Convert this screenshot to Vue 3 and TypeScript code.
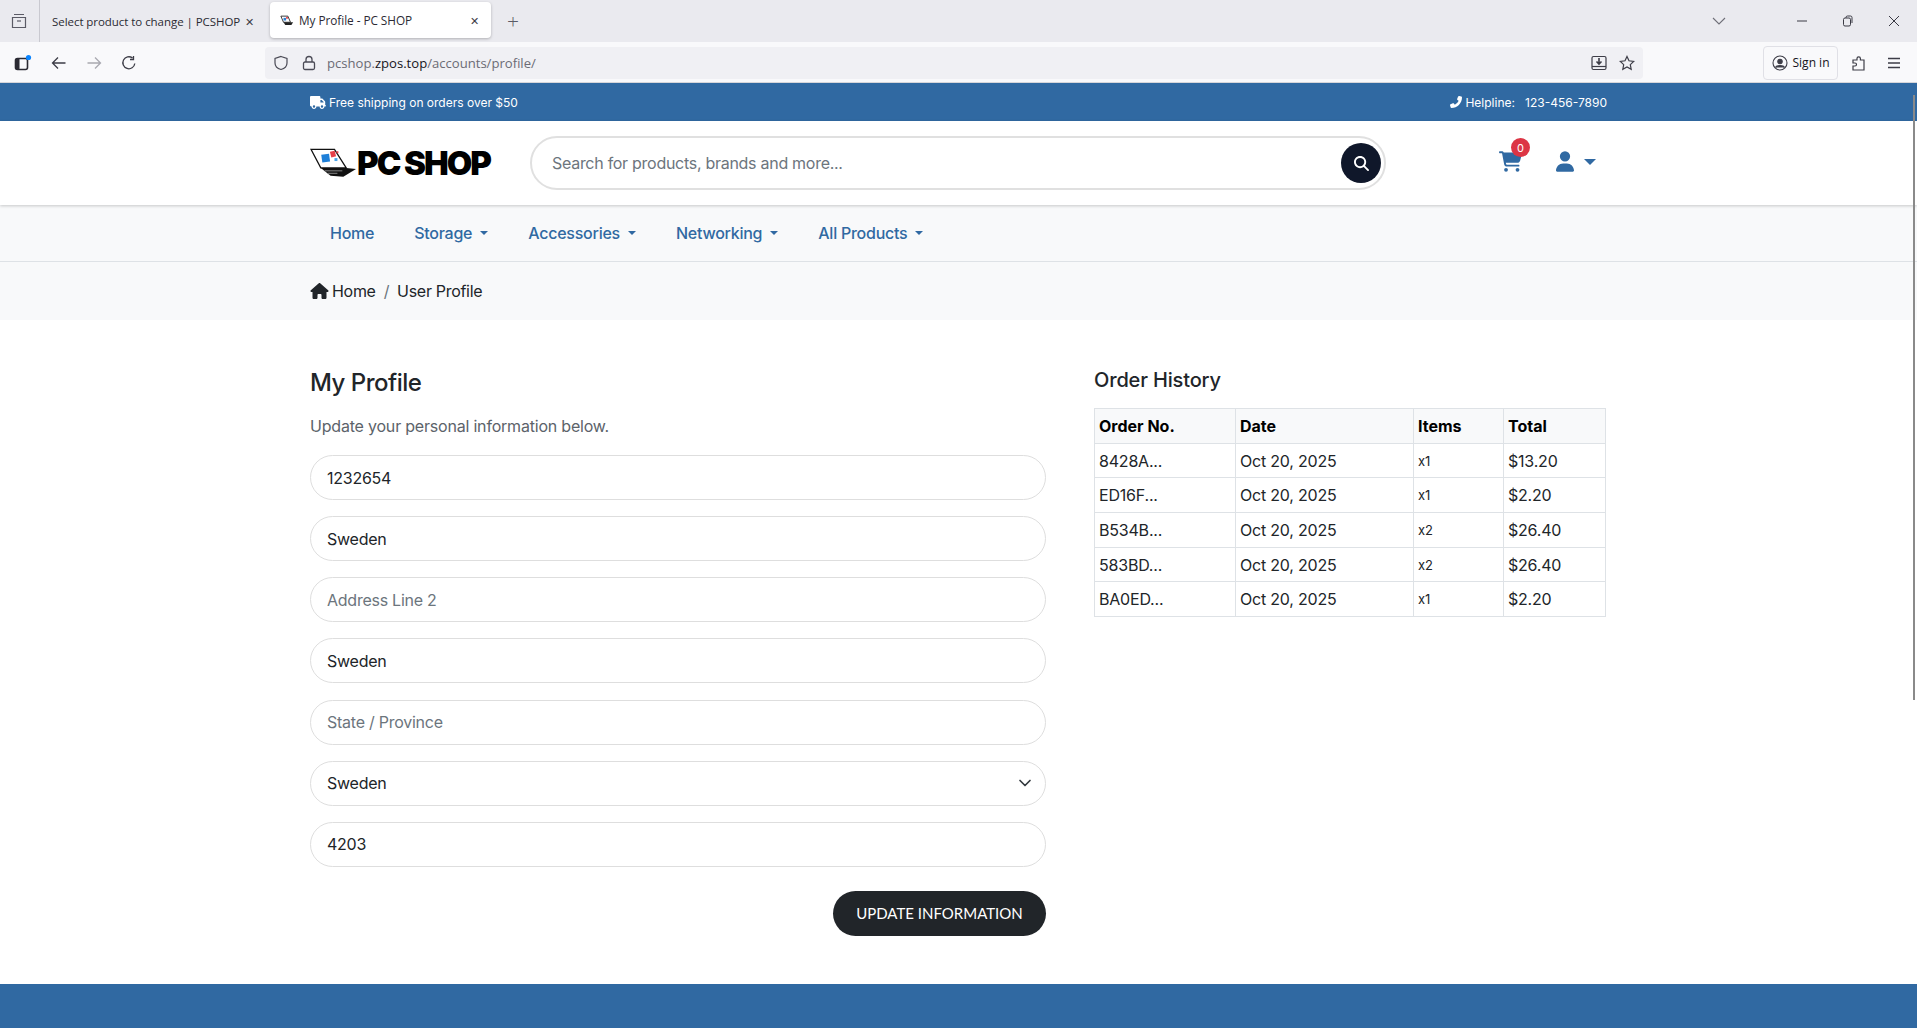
<script setup lang="ts">
interface Order {
  no: string
  date: string
  items: string
  total: string
}

const orders: Order[] = [
  { no: '8428A...', date: 'Oct 20, 2025', items: 'x1', total: '$13.20' },
  { no: 'ED16F...', date: 'Oct 20, 2025', items: 'x1', total: '$2.20' },
  { no: 'B534B...', date: 'Oct 20, 2025', items: 'x2', total: '$26.40' },
  { no: '583BD...', date: 'Oct 20, 2025', items: 'x2', total: '$26.40' },
  { no: 'BA0ED...', date: 'Oct 20, 2025', items: 'x1', total: '$2.20' },
]

const navItems = [
  { label: 'Home', caret: false },
  { label: 'Storage', caret: true },
  { label: 'Accessories', caret: true },
  { label: 'Networking', caret: true },
  { label: 'All Products', caret: true },
]
</script>

<template>
  <div class="window">
    <!-- Browser chrome -->
    <div class="tabstrip">
      <div class="strip-start">
        <svg viewBox="0 0 16 16" width="16" height="16" fill="none" stroke="#5b5b66" stroke-width="1.2">
          <path d="M3 1.5h10M1.5 4.5h13v10h-13z" />
          <path d="M6 8h4" />
        </svg>
      </div>
      <div class="tab">
        <span class="tab-title">Select product to change | PCSHOP</span>
        <span class="tab-close">✕</span>
      </div>
      <div class="tab tab-active">
        <svg class="favicon" viewBox="0 0 16 12" width="14" height="11">
          <path d="M1 1h8l3 7H4z" fill="#fff" stroke="#222" />
          <path d="M4 8h11l-2 3H6z" fill="#222" />
          <rect x="4" y="3" width="3" height="3" fill="#2d7fd3" />
          <rect x="7" y="2" width="2" height="2" fill="#e5404a" />
        </svg>
        <span class="tab-title">My Profile - PC SHOP</span>
        <span class="tab-close">✕</span>
      </div>
      <span class="new-tab">+</span>
      <div class="strip-end">
        <svg class="strip-chevron" viewBox="0 0 14 8" width="14" height="8" fill="none" stroke="#6f6f78" stroke-width="1.1">
          <path d="M1 1l6 6 6-6" />
        </svg>
        <div class="win-controls">
          <svg viewBox="0 0 12 12" width="12" height="12" stroke="#3a3a44" fill="none"><path d="M1 6h10" /></svg>
          <svg viewBox="0 0 12 12" width="12" height="12" stroke="#3a3a44" fill="none"><rect x="1.5" y="3" width="7" height="8" rx="1.5" /><path d="M4 3V2.5A1.5 1.5 0 0 1 5.5 1h3A1.5 1.5 0 0 1 10 2.5V8" /></svg>
          <svg viewBox="0 0 12 12" width="12" height="12" stroke="#3a3a44" fill="none"><path d="M1 1l10 10M11 1L1 11" /></svg>
        </div>
      </div>
    </div>

    <div class="toolbar">
      <div class="tool-left">
        <span class="sidebar-btn">
          <svg viewBox="0 0 18 18" width="18" height="18" fill="none">
            <rect x="1.5" y="4.5" width="12" height="11" rx="2" stroke="#2b2a33" stroke-width="1.6" />
            <rect x="1.5" y="4.5" width="4" height="11" rx="1" fill="#2b2a33" />
            <circle cx="14.5" cy="3.5" r="2.6" fill="#0a84ff" />
          </svg>
        </span>
        <svg viewBox="0 0 16 16" width="16" height="16" fill="none" stroke="#3d3d47" stroke-width="1.3"><path d="M14.5 8h-13M7 2.5L1.5 8 7 13.5" /></svg>
        <svg viewBox="0 0 16 16" width="16" height="16" fill="none" stroke="#a9a9b0" stroke-width="1.3"><path d="M1.5 8h13M9 2.5L14.5 8 9 13.5" /></svg>
        <svg viewBox="0 0 16 16" width="16" height="16" fill="none" stroke="#3d3d47" stroke-width="1.3"><path d="M13.8 8.5A6 6 0 1 1 11.5 3M12.5 1v3.5H9" /></svg>
      </div>
      <div class="urlbar">
        <svg viewBox="0 0 16 16" width="16" height="16" fill="none" stroke="#4a4a55" stroke-width="1.2"><path d="M8 1.5l6 2v4.500c0 3-2.500 5.500-6 6.500-3.500-1-6-3.500-6-6.500V3.500z" /></svg>
        <svg class="lock" viewBox="0 0 14 16" width="14" height="16" fill="none" stroke="#4a4a55" stroke-width="1.3"><rect x="1.5" y="7" width="11" height="7.500" rx="1.500" /><path d="M4 7V4.500a3 3 0 0 1 6 0V7" /></svg>
        <span class="url">pcshop.<b>zpos.top</b>/accounts/profile/</span>
        <span class="url-actions">
          <svg viewBox="0 0 16 16" width="16" height="16" fill="none" stroke="#3d3d47" stroke-width="1.2"><rect x="1" y="1.500" width="14" height="13" rx="1.500" /><path d="M1 11.500h14" /><path d="M8 3v6M5.500 6.500L8 9l2.500-2.500" stroke-width="1.600" /></svg>
          <svg viewBox="0 0 16 16" width="16" height="16" fill="none" stroke="#3d3d47" stroke-width="1.2"><path d="M8 1.500l2 4.300 4.700.6-3.400 3.200.9 4.700L8 12l-4.200 2.300.9-4.700L1.300 6.400 6 5.800z" /></svg>
        </span>
      </div>
      <div class="tool-right">
        <span class="signin">
          <svg viewBox="0 0 16 16" width="16" height="16" fill="none" stroke="#3d3d47" stroke-width="1.1">
            <circle cx="8" cy="8" r="7" />
            <circle cx="8" cy="6.500" r="2.200" fill="#3d3d47" />
            <path d="M3.500 12.500c1-2.500 8-2.500 9 0" fill="#3d3d47" />
          </svg>
          Sign in
        </span>
        <svg class="puzzle" viewBox="0 0 16 16" width="16" height="16" fill="none" stroke="#3d3d47" stroke-width="1.2"><path d="M2 15V11h2a1.500 1.500 0 0 0 0-3H2V5h4V3.500a1.700 1.700 0 0 1 3.400 0V5H13v10z" /></svg>
        <svg viewBox="0 0 16 16" width="16" height="16" stroke="#3d3d47" stroke-width="1.300"><path d="M2 3.500h12M2 8h12M2 12.500h12" /></svg>
      </div>
    </div>

    <!-- Page -->
    <div class="topbar">
      <div class="container topbar-row">
        <span class="topbar-item">
          <svg viewBox="0 0 640 512" width="16" height="13" fill="#fff">
            <path d="M48 0C21.500 0 0 21.500 0 48V368c0 26.500 21.500 48 48 48h16c0 53 43 96 96 96s96-43 96-96H384c0 53 43 96 96 96s96-43 96-96h32c17.700 0 32-14.300 32-32s-14.300-32-32-32V237.300c0-17-6.700-33.300-18.700-45.300L512 114.700c-12-12-28.300-18.700-45.300-18.700H416V48c0-26.500-21.500-48-48-48H48zM416 160h50.700L544 237.300V256H416V160zM208 416a48 48 0 1 1-96 0 48 48 0 1 1 96 0zm272 48a48 48 0 1 1 0-96 48 48 0 1 1 0 96z" />
          </svg>
          Free shipping on orders over $50
        </span>
        <span class="topbar-item">
          <svg viewBox="0 0 512 512" width="12" height="12" fill="#fff">
            <path d="M164.900 24.600c-7.700-18.600-28-28.500-47.400-23.200l-88 24C12.100 30.200 0 46 0 64C0 311.400 200.600 512 448 512c18 0 33.800-12.100 38.600-29.500l24-88c5.300-19.400-4.600-39.700-23.200-47.400l-96-40c-16.300-6.800-35.200-2.100-46.300 11.600L304.700 368C234.300 334.700 177.300 277.700 144 207.300L193.300 167c13.700-11.200 18.400-30 11.600-46.300l-40-96z" transform="matrix(-1 0 0 1 512 0)" />
          </svg>
          Helpline:&nbsp;&nbsp; 123-456-7890
        </span>
      </div>
    </div>

    <header class="site-header">
      <div class="container header-row">
        <div class="logo">
          <svg viewBox="0 0 48 30" width="47" height="30">
            <path d="M1 1h24l12 19H11z" fill="#fff" stroke="#111" stroke-width="1.300" />
            <path d="M11 20h26l10 1-13 8-13-1z" fill="#111" />
            <path d="M15 23h18M18 25.500h10" stroke="#888" stroke-width="1" />
            <rect x="12" y="6" width="8" height="8" fill="#1e7fd8" transform="rotate(-8 16 10)" />
            <rect x="21" y="3" width="5" height="6" fill="#e5404a" transform="rotate(-14 23 6)" />
            <rect x="27" y="3" width="2" height="2" fill="#e5404a" />
            <rect x="25" y="10" width="3" height="3" fill="#4aa3e8" />
          </svg>
          <span class="logo-text">PC SHOP</span>
        </div>
        <div class="search">
          <span class="search-text">Search for products, brands and more...</span>
          <span class="search-btn">
            <svg viewBox="0 0 512 512" width="15" height="15" fill="#fff">
              <path d="M416 208c0 45.900-14.900 88.300-40 122.700L502.600 457.400c12.500 12.500 12.500 32.800 0 45.300s-32.800 12.500-45.300 0L330.700 376c-34.400 25.200-76.800 40-122.700 40C93.100 416 0 322.900 0 208S93.100 0 208 0S416 93.100 416 208zM208 352a144 144 0 1 0 0-288 144 144 0 1 0 0 288z" />
            </svg>
          </span>
        </div>
        <div class="header-icons">
          <span class="cart">
            <svg viewBox="0 0 576 512" width="23" height="21" fill="#3069a2">
              <path d="M0 24C0 10.700 10.700 0 24 0H69.500c22 0 41.500 12.800 50.600 32h411c26.300 0 45.500 25 38.600 50.400l-41 152.300c-8.500 31.400-37 53.300-69.500 53.300H170.700l5.400 28.500c2.200 11.300 12.100 19.500 23.600 19.500H488c13.300 0 24 10.700 24 24s-10.700 24-24 24H199.700c-34.600 0-64.300-24.600-70.700-58.500L77.400 54.500c-.7-3.800-4-6.500-7.900-6.500H24C10.700 48 0 37.300 0 24zM128 464a48 48 0 1 1 96 0 48 48 0 1 1-96 0zm336-48a48 48 0 1 1 0 96 48 48 0 1 1 0-96z" />
            </svg>
            <span class="badge">0</span>
          </span>
          <span class="user">
            <svg viewBox="0 0 448 512" width="18" height="21" fill="#3069a2">
              <path d="M224 256A128 128 0 1 0 224 0a128 128 0 1 0 0 256zm-45.700 48C79.800 304 0 383.800 0 482.300C0 498.700 13.300 512 29.700 512H418.300c16.400 0 29.700-13.300 29.700-29.700C448 383.800 368.200 304 269.700 304H178.300z" />
            </svg>
            <i class="user-caret"></i>
          </span>
        </div>
      </div>
    </header>

    <nav class="site-nav">
      <div class="container nav-row">
        <a v-for="item in navItems" :key="item.label" class="nav-link">
          {{ item.label }}<i v-if="item.caret" class="caret"></i>
        </a>
      </div>
    </nav>

    <div class="crumbs">
      <div class="container crumb-row">
        <svg viewBox="0 0 576 512" width="19" height="16" fill="#212529">
          <path d="M575.800 255.500c0 18-15 32.100-32 32.100h-32l.7 160.200c0 2.700-.2 5.400-.5 8.100V472c0 22.100-17.900 40-40 40H456c-1.100 0-2.200 0-3.300-.1c-1.400 .1-2.800 .1-4.200 .1H416 392c-22.100 0-40-17.900-40-40V448 384c0-17.700-14.300-32-32-32H256c-17.700 0-32 14.300-32 32v64 24c0 22.100-17.900 40-40 40H160 128.100c-1.500 0-3-.1-4.500-.2c-1.200 .1-2.400 .2-3.600 .2H104c-22.100 0-40-17.900-40-40V360c0-.9 0-1.900 .1-2.800V287.600H32c-18 0-32-14-32-32.100c0-9 3-17 10-24L266.400 8c7-7 15-8 22-8s15 2 21 7L564.800 231.500c8 7 12 15 11 24z" />
        </svg>
        <span>Home</span>
        <span class="crumb-sep">/</span>
        <span>User Profile</span>
      </div>
    </div>

    <main class="container profile">
      <section class="profile-form">
        <h1>My Profile</h1>
        <p class="lead">Update your personal information below.</p>
        <form class="fields" @submit.prevent>
          <input class="field" value="1232654" />
          <input class="field" value="Sweden" />
          <input class="field" placeholder="Address Line 2" />
          <input class="field" value="Sweden" />
          <input class="field" placeholder="State / Province" />
          <div class="select-wrap">
            <select class="field">
              <option>Sweden</option>
            </select>
            <svg class="select-chevron" viewBox="0 0 16 16" width="16" height="16" fill="none" stroke="#343a40" stroke-width="1.700" stroke-linecap="round" stroke-linejoin="round">
              <path d="M3 5.500l5 5 5-5" />
            </svg>
          </div>
          <input class="field" value="4203" />
          <button class="submit" type="submit">UPDATE INFORMATION</button>
        </form>
      </section>

      <section class="history">
        <h2>Order History</h2>
        <table>
          <thead>
            <tr>
              <th>Order No.</th>
              <th>Date</th>
              <th>Items</th>
              <th>Total</th>
            </tr>
          </thead>
          <tbody>
            <tr v-for="o in orders" :key="o.no">
              <td>{{ o.no }}</td>
              <td>{{ o.date }}</td>
              <td class="qty">{{ o.items }}</td>
              <td>{{ o.total }}</td>
            </tr>
          </tbody>
        </table>
      </section>
    </main>

    <footer class="site-footer"></footer>
    <div class="scrollbar"></div>
  </div>
</template>

<style>
html,
body {
  margin: 0;
  height: 100%;
  overflow: hidden;
  background: #fff;
}
</style>

<style scoped>
.window {
  position: relative;
  height: 1028px;
  overflow: hidden;
  font-family: Inter, "Noto Sans", sans-serif;
  color: #212529;
}

/* Browser chrome */
.tabstrip {
  height: 42px;
  display: flex;
  align-items: center;
  background: #eaeaef;
  font-family: "Open Sans", "Noto Sans", sans-serif;
  font-size: 11.5px;
  letter-spacing: -0.05px;
  color: #2b2a33;
}

.strip-start {
  width: 40px;
  height: 100%;
  display: flex;
  align-items: center;
  justify-content: center;
  padding-right: 2px;
  border-right: 1px solid #c9c9d0;
  box-sizing: border-box;
}

.tab {
  width: 228px;
  height: 36px;
  padding: 0 14px 0 12px;
  box-sizing: border-box;
  display: flex;
  align-items: center;
  gap: 2px;
  margin-right: 2px;
}

.tab-active {
  width: 221px;
  margin-top: -2px;
  padding: 0 12px 0 10px;
  gap: 5px;
  background: #fff;
  border-radius: 4px;
  box-shadow: 0 1px 3px rgba(0, 0, 0, 0.25);
}

.tab-active .tab-title {
  font-size: 11.800px;
}

.tab-title {
  flex: 1;
  overflow: hidden;
  white-space: nowrap;
}

.tab-close {
  font-size: 11px;
  color: #3d3d47;
}

.new-tab {
  margin-left: 14px;
  font-size: 21px;
  font-weight: 300;
  color: #5b5b66;
}

.strip-end {
  margin-left: auto;
  display: flex;
  align-items: center;
}

.strip-chevron {
  margin-right: 70px;
}

.win-controls {
  display: flex;
  gap: 34px;
  padding-right: 17px;
}

.toolbar {
  height: 41px;
  padding-top: 1px;
  box-sizing: border-box;
  display: flex;
  align-items: center;
  background: #f9f9fb;
  border-bottom: 1px solid #d6d6da;
  font-family: "Open Sans", "Noto Sans", sans-serif;
}

.tool-left {
  width: 265px;
  display: flex;
  align-items: center;
  gap: 19px;
  padding-left: 14px;
  box-sizing: border-box;
}

.sidebar-btn {
  display: flex;
}

.urlbar {
  width: 1378px;
  height: 32px;
  background: #f0f0f4;
  border-radius: 4px;
  display: flex;
  align-items: center;
  padding: 0 8px;
  box-sizing: border-box;
}

.lock {
  margin-left: 13px;
}

.url {
  margin-left: 11px;
  font-size: 13.100px;
  color: #6b6b75;
}

.url b {
  font-weight: 400;
  color: #15141a;
}

.url-actions {
  margin-left: auto;
  display: flex;
  gap: 12px;
  padding-right: 0;
}

.tool-right {
  flex: 1;
  display: flex;
  align-items: center;
  padding-left: 120px;
}

.signin {
  width: 75px;
  height: 34px;
  box-sizing: border-box;
  border: 1px solid #e0e0e6;
  border-radius: 4px;
  display: flex;
  align-items: center;
  justify-content: center;
  gap: 5px;
  font-size: 12px;
  color: #15141a;
}

.puzzle {
  margin: 0 19px 0 13px;
}

/* Page */
.container {
  width: 1297px;
  margin: 0 auto;
}

.topbar {
  height: 38px;
  background: #3069a2;
  color: #fff;
  font-size: 12px;
}

.topbar-row {
  height: 100%;
  display: flex;
  align-items: center;
  justify-content: space-between;
}

.topbar-item {
  display: flex;
  align-items: center;
  gap: 3px;
}

.site-header {
  height: 84px;
  background: #fff;
  box-shadow: 0 1px 3px rgba(0, 0, 0, 0.2);
  position: relative;
}

.header-row {
  height: 100%;
  display: flex;
  align-items: center;
}

.logo {
  width: 220px;
  display: flex;
  align-items: center;
}

.logo-text {
  font-family: Inter, sans-serif;
  font-size: 33px;
  font-weight: 900;
  letter-spacing: -2px;
  color: #000;
  line-height: 1;
  white-space: nowrap;
}

.search {
  width: 856px;
  height: 54px;
  box-sizing: border-box;
  border: 2px solid #e0e0e0;
  border-radius: 27px;
  display: flex;
  align-items: center;
  justify-content: space-between;
  padding: 0 3px 0 20px;
  color: #6c757d;
  font-size: 16px;
  letter-spacing: -0.28px;
}

.search-btn {
  width: 40px;
  height: 40px;
  border-radius: 50%;
  background: #0f172a;
  display: flex;
  align-items: center;
  justify-content: center;
}

.header-icons {
  display: flex;
  align-items: center;
  margin-left: 113px;
  margin-top: -3px;
  gap: 34px;
}

.cart {
  position: relative;
  display: flex;
}

.badge {
  position: absolute;
  top: -13px;
  left: 12px;
  width: 19px;
  height: 19px;
  border-radius: 50%;
  background: #dc3545;
  color: #fff;
  font-size: 11px;
  display: flex;
  align-items: center;
  justify-content: center;
}

.user {
  display: flex;
  align-items: center;
  gap: 10px;
}

.user-caret {
  width: 0;
  height: 0;
  border-left: 6px solid transparent;
  border-right: 6px solid transparent;
  border-top: 6px solid #3069a2;
}

.site-nav {
  height: 57px;
  background: #f8f9fa;
  border-bottom: 1px solid #dee2e6;
  box-sizing: border-box;
}

.nav-row {
  height: 100%;
  display: flex;
  align-items: center;
  gap: 40px;
  padding-left: 20px;
  box-sizing: border-box;
}

.nav-link {
  font-size: 16px;
  font-weight: 500;
  letter-spacing: -0.25px;
  color: #3069a2;
  display: flex;
  align-items: center;
}

.caret {
  margin-left: 8px;
  width: 0;
  height: 0;
  border-left: 4px solid transparent;
  border-right: 4px solid transparent;
  border-top: 4px solid #3069a2;
}

.crumbs {
  height: 58px;
  background: #f8f9fa;
}

.crumb-row {
  height: 100%;
  display: flex;
  align-items: center;
  font-size: 16px;
  letter-spacing: -0.3px;
  gap: 3px;
}

.crumb-sep {
  margin: 0 5px;
  color: #6c757d;
}

.profile {
  height: 664px;
  box-sizing: border-box;
  padding-top: 48px;
  display: grid;
  grid-template-columns: 736px 513px;
  column-gap: 48px;
}

h1 {
  margin: 0;
  font-size: 24px;
  font-weight: 500;
  line-height: 30px;
  letter-spacing: -0.5px;
}

.lead {
  margin: 16px 0 17px;
  font-size: 16px;
  line-height: 24px;
  letter-spacing: -0.2px;
  color: #5c636a;
}

.fields {
  display: flex;
  flex-direction: column;
  gap: 16.150px;
}

.field {
  width: 100%;
  height: 45px;
  box-sizing: border-box;
  border: 1px solid #dedede;
  border-radius: 23px;
  padding: 0 16px;
  font: inherit;
  font-size: 16px;
  letter-spacing: -0.25px;
  color: #212529;
  background: #fff;
  outline: none;
  appearance: none;
}

.field::placeholder {
  color: #6c757d;
}

.select-wrap {
  position: relative;
}

.select-wrap .field {
  display: block;
}

.select-chevron {
  position: absolute;
  right: 13px;
  top: 14px;
  pointer-events: none;
}

.submit {
  align-self: flex-end;
  margin-top: 8px;
  width: 213px;
  height: 45px;
  border: none;
  border-radius: 23px;
  background: #212529;
  color: #fff;
  font-family: Lato, sans-serif;
  font-size: 15px;
  padding: 0;
}

h2 {
  margin: 0 0 16px;
  font-size: 20px;
  font-weight: 500;
  line-height: 24px;
  letter-spacing: -0.15px;
}

table {
  width: 512px;
  border-collapse: collapse;
  table-layout: fixed;
  font-size: 16px;
}

th:nth-child(1) { width: 141px; }
th:nth-child(2) { width: 178px; }
th:nth-child(3) { width: 90px; }

th,
td {
  height: 34.700px;
  padding: 0 4px;
  box-sizing: border-box;
  border: 1px solid #dee2e6;
  text-align: left;
  white-space: nowrap;
}

td {
  letter-spacing: -0.2px;
}

th {
  background: #f8f9fa;
  font-weight: 700;
  color: #000;
}

.qty {
  font-size: 13px;
}

.site-footer {
  height: 120px;
  background: #3069a2;
}

.scrollbar {
  position: absolute;
  right: 2px;
  top: 95px;
  width: 2px;
  height: 605px;
  background: #8a8a8a;
}
</style>
